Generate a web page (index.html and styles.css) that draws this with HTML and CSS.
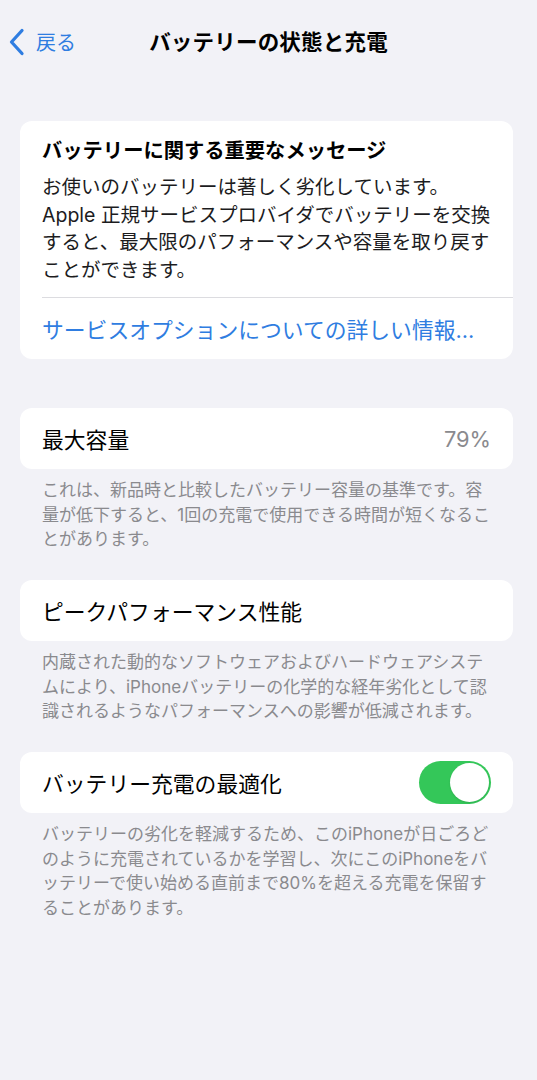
FILE: index.html
```html
<!DOCTYPE html>
<html lang="ja">
<head>
    <meta charset="utf-8">
    <title>バッテリーの状態と充電</title>
    <link rel="stylesheet" href="styles.css">
</head>
<body>
    <div class="nav">
        <a class="back" href="#">
            <svg class="chevron" width="17" height="28" viewBox="0 0 17 28">
                <path d="M14 2.5 L3.5 14 L14 25.5" fill="none" stroke="#2f7de1" stroke-width="3.3" stroke-linecap="round" stroke-linejoin="round"/>
            </svg>
            <span>戻る</span>
        </a>
        <h1 class="title">バッテリーの状態と充電</h1>
    </div>

    <div class="content">
        <div class="card message-card">
            <div class="message-body">
                <h2>バッテリーに関する重要なメッセージ</h2>
                <p>お使いのバッテリーは著しく劣化しています。Apple 正規サービスプロバイダでバッテリーを交換すると、最大限のパフォーマンスや容量を取り戻すことができます。</p>
            </div>
            <div class="row link-row">サービスオプションについての詳しい情報...</div>
        </div>

        <div class="card">
            <div class="row">
                <span>最大容量</span>
                <span class="value">79%</span>
            </div>
        </div>
        <p class="footer">これは、新品時と比較したバッテリー容量の基準です。容量が低下すると、1回の充電で使用できる時間が短くなることがあります。</p>

        <div class="card">
            <div class="row">
                <span>ピークパフォーマンス性能</span>
            </div>
        </div>
        <p class="footer">内蔵された動的なソフトウェアおよびハードウェアシステムにより、iPhoneバッテリーの化学的な経年劣化として認識されるようなパフォーマンスへの影響が低減されます。</p>

        <div class="card">
            <div class="row">
                <span>バッテリー充電の最適化</span>
                <span class="toggle"><span class="knob"></span></span>
            </div>
        </div>
        <p class="footer">バッテリーの劣化を軽減するため、このiPhoneが日ごろどのように充電されているかを学習し、次にこのiPhoneをバッテリーで使い始める直前まで80%を超える充電を保留することがあります。</p>
    </div>
</body>
</html>
```

FILE: styles.css
```css
body {
    margin: 0;
    background-color: #f2f2f7;
    font-family: Inter, "Noto Sans CJK JP", sans-serif;
    color: #000000;
}

.nav {
    display: flex;
    align-items: center;
    justify-content: center;
    height: 80px;
    position: relative;
}

.back {
    position: absolute;
    left: 8px;
    top: 27px;
    display: flex;
    align-items: center;
    gap: 11px;
    color: #2f7de1;
    text-decoration: none;
    font-size: 20px;
}

.chevron {
    display: block;
}

.title {
    margin: 0;
    font-size: 21.5px;
    font-weight: 700;
    letter-spacing: 0.2px;
}

.content {
    padding: 41px 24px 0 20px;
}

.card {
    background-color: #ffffff;
    border-radius: 12px;
    overflow: hidden;
}

.message-card {
    margin-bottom: 49px;
}

.message-body {
    margin-left: 22px;
    padding: 16px 22px 13px 0;
    border-bottom: 1px solid #dcdce0;
}

.message-body h2 {
    margin: 0;
    font-size: 20.3px;
    line-height: 28px;
    font-weight: 700;
}

.message-body p {
    margin: 9px 0 0;
    font-size: 19.5px;
    line-height: 27.5px;
    color: #1c1c1e;
}

.row {
    display: flex;
    align-items: center;
    justify-content: space-between;
    height: 61px;
    padding: 0 22px;
    font-size: 21.8px;
}

.link-row {
    color: #2f7de1;
}

.value {
    color: #8a8a8e;
}

.footer {
    margin: 9px 0 28.5px;
    padding: 0 16px 0 22px;
    font-size: 17px;
    line-height: 24.5px;
    color: #8a8a8e;
}

.toggle {
    display: flex;
    justify-content: flex-end;
    align-items: center;
    width: 72px;
    height: 43px;
    padding: 0 2px;
    box-sizing: border-box;
    border-radius: 22px;
    background-color: #34c759;
}

.knob {
    width: 39px;
    height: 39px;
    border-radius: 50%;
    background-color: #ffffff;
    box-shadow: 0 1px 2px rgba(0, 0, 0, 0.12);
}
```
